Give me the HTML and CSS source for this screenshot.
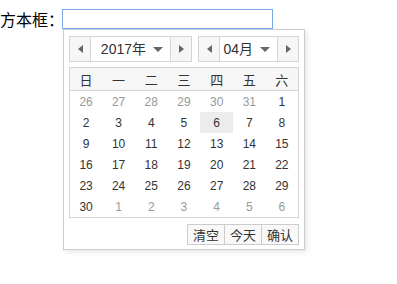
FILE: index.html
```html
<!DOCTYPE html>
<html lang="zh-CN">
<head>
    <meta charset="UTF-8">
    <meta name="viewport" content="width=device-width, initial-scale=1.0">
    <title>laydate</title>
    <link rel="stylesheet" href="styles.css">
</head>
<body>
    <div class="field">
        <label class="field-label" for="date">方本框：</label>
        <input id="date" class="field-input" type="text">
    </div>

    <div class="laydate">
        <div class="ld-top">
            <div class="ld-ym ld-y">
                <a class="ld-choose"><span class="tri-left"></span></a>
                <div class="ld-val">2017年<span class="tri-down"></span></div>
                <a class="ld-choose"><span class="tri-right"></span></a>
            </div>
            <div class="ld-ym ld-m">
                <a class="ld-choose"><span class="tri-left"></span></a>
                <div class="ld-val">04月<span class="tri-down"></span></div>
                <a class="ld-choose"><span class="tri-right"></span></a>
            </div>
        </div>

        <table class="ld-table">
            <thead>
                <tr><th>日</th><th>一</th><th>二</th><th>三</th><th>四</th><th>五</th><th>六</th></tr>
            </thead>
            <tbody>
                <tr><td class="nothis">26</td><td class="nothis">27</td><td class="nothis">28</td><td class="nothis">29</td><td class="nothis">30</td><td class="nothis">31</td><td>1</td></tr>
                <tr><td>2</td><td>3</td><td>4</td><td>5</td><td class="today">6</td><td>7</td><td>8</td></tr>
                <tr><td>9</td><td>10</td><td>11</td><td>12</td><td>13</td><td>14</td><td>15</td></tr>
                <tr><td>16</td><td>17</td><td>18</td><td>19</td><td>20</td><td>21</td><td>22</td></tr>
                <tr><td>23</td><td>24</td><td>25</td><td>26</td><td>27</td><td>28</td><td>29</td></tr>
                <tr><td>30</td><td class="nothis">1</td><td class="nothis">2</td><td class="nothis">3</td><td class="nothis">4</td><td class="nothis">5</td><td class="nothis">6</td></tr>
            </tbody>
        </table>

        <div class="ld-bottom">
            <div class="ld-btns">
                <a>清空</a><a>今天</a><a>确认</a>
            </div>
        </div>
    </div>
</body>
</html>
```

FILE: styles.css
```css
body {
    margin: 0;
    padding: 9px 0 40px 0;
    background: #fff;
    color: #000;
    font-family: "Noto Sans CJK SC", sans-serif;
}

.field {
    display: flex;
    align-items: center;
}

.field-label {
    width: 62px;
    font-size: 16px;
    line-height: 20px;
    white-space: nowrap;
}

.field-input {
    display: block;
    box-sizing: border-box;
    width: 211px;
    height: 20px;
    margin: 0;
    padding: 0 4px;
    border: 1px solid #7aa7e9;
    outline: none;
}

/* date popup */
.laydate {
    width: 240px;
    margin-left: 63px;
    border: 1px solid #ccc;
    background: #fff;
    box-shadow: 2px 2px 5px rgba(0, 0, 0, 0.1);
    font-family: "Liberation Sans", "Noto Sans CJK SC", sans-serif;
    color: #333;
}

.ld-top {
    display: flex;
    gap: 6px;
    padding: 6px 5px 5px 5px;
}

.ld-ym {
    display: flex;
    height: 24px;
    border: 1px solid #d5d5d5;
}

.ld-y {
    width: 121px;
}

.ld-m {
    width: 99px;
}

.ld-choose {
    display: flex;
    align-items: center;
    justify-content: center;
    width: 20px;
    background: #f6f6f6;
}

.ld-choose:first-child {
    border-right: 1px solid #d5d5d5;
}

.ld-choose:last-child {
    border-left: 1px solid #d5d5d5;
}

.ld-val {
    flex: 1;
    display: flex;
    align-items: center;
    justify-content: flex-end;
    padding-right: 7px;
    font-size: 14px;
    line-height: 24px;
    color: #333;
}

.tri-left, .tri-right, .tri-down {
    width: 0;
    height: 0;
    border-style: solid;
}

.tri-left {
    border-width: 4px 5px 4px 0;
    border-color: transparent #666 transparent transparent;
}

.tri-right {
    border-width: 4px 0 4px 5px;
    border-color: transparent transparent transparent #666;
}

.tri-down {
    margin-left: 7px;
    border-width: 5px 5px 0 5px;
    border-color: #666 transparent transparent transparent;
}

.ld-table {
    width: 230px;
    margin: 0 5px;
    table-layout: fixed;
    border-collapse: collapse;
    border-spacing: 0;
    border: 1px solid #d5d5d5;
}

.ld-table thead tr {
    background: #f6f6f6;
    border-bottom: 1px solid #d5d5d5;
}

.ld-table th {
    height: 22px;
    padding: 0;
    font-weight: 400;
    font-size: 13px;
    text-align: center;
    font-family: "Noto Sans CJK SC", sans-serif;
    color: #333;
}

.ld-table td {
    height: 21px;
    padding: 0;
    font-size: 12px;
    text-align: center;
    color: #333;
}

.ld-table td.nothis {
    color: #999;
}

.ld-table td.today {
    background: #ececec;
}

.ld-bottom {
    display: flex;
    justify-content: flex-end;
    padding: 6px 5px 4px 5px;
}

.ld-btns {
    display: flex;
}

.ld-btns a {
    height: 19px;
    padding: 0 5px;
    line-height: 19px;
    border: 1px solid #ccc;
    background: #f8f8f8;
    font-size: 13px;
    font-family: "Noto Sans CJK SC", sans-serif;
    color: #333;
}

.ld-btns a + a {
    border-left: none;
}
```
